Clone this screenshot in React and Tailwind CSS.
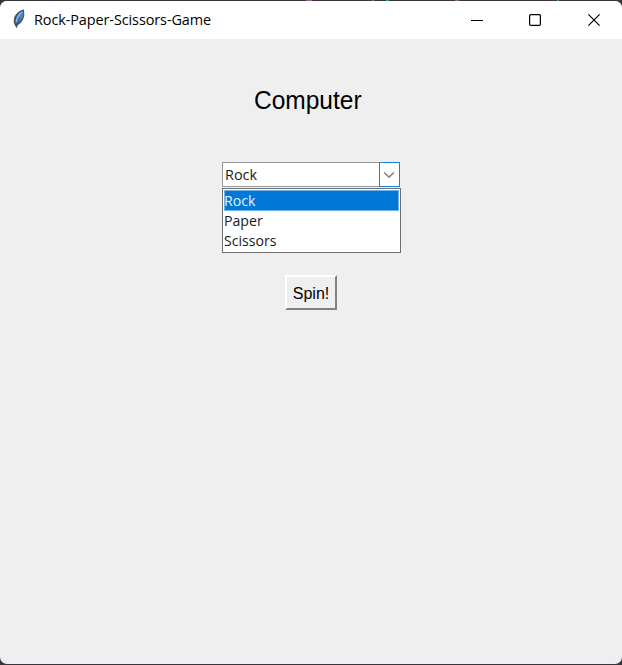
const options = ["Rock", "Paper", "Scissors"];

function Feather() {
  return (
    <svg className="-mt-[2px] ml-[12px] h-[21px] w-[14px] shrink-0" viewBox="0 0 14 21">
      <path d="M12 .6 C8.5 .8 3.6 4.5 2 9 L1.7 13.4 L2.8 16 L4.6 19.6 L5.4 16.2 C9.2 14.4 11.8 10.6 12.3 6 Z" fill="#4a4f57" />
      <path d="M11.2 1.6 C7.2 3.2 3.4 7 3.4 14.6 C8 13.4 10.8 9.9 11.4 5.4 Z" fill="#4788cc" />
      <path d="M9.6 3.2 C6.6 5.8 4.8 9.2 4.3 13" stroke="#8fbbe6" strokeWidth="1.3" fill="none" />
      <path d="M8 8.8 C7 11 5.4 13.6 4.6 18" stroke="#2a4264" strokeWidth=".8" fill="none" />
    </svg>
  );
}

function TitleBar() {
  return (
    <header className="flex h-[38px] shrink-0 items-center bg-white">
      <Feather />
      <h1 className="-mt-[2px] ml-[8px] w-[200px] origin-left scale-x-[0.963] whitespace-nowrap font-['Open_Sans',sans-serif] text-[15px] leading-[20px] tracking-[-0.1px] text-black">
        Rock-Paper-Scissors-Game
      </h1>
      <div className="ml-auto flex h-full">
        <button aria-label="Minimize" className="flex w-[58px] items-center justify-center">
          <svg width="12" height="12" viewBox="0 0 12 12"><path d="M0 6.5H12" stroke="#000" /></svg>
        </button>
        <button aria-label="Maximize" className="flex w-[58px] items-center justify-center">
          <svg width="12" height="12" viewBox="0 0 12 12"><rect x=".6" y=".6" width="10.8" height="10.8" rx="1.2" fill="none" stroke="#000" strokeWidth="1.2" /></svg>
        </button>
        <button aria-label="Close" className="flex w-[58px] items-center justify-center pl-[2px]">
          <svg width="12" height="12" viewBox="0 0 12 12"><path d="M.4 .4L11.6 11.6M11.6 .4L.4 11.6" stroke="#000" strokeWidth="1.15" /></svg>
        </button>
      </div>
    </header>
  );
}

export default function App() {
  return (
    <div className="flex h-[665px] w-[622px] flex-col bg-[#38363a]">
      <div className="flex h-px shrink-0">
        <i className="ml-[306px] w-[6px] bg-[#93618c]" />
        <i className="ml-[60px] w-[2px] bg-[#3a9a8b]" />
        <i className="ml-[12px] w-[3px] bg-[#3a9a8b]" />
        <i className="ml-[66px] w-[4px] bg-[#93618c]" />
        <i className="ml-[98px] w-[2px] bg-[#3a9a8b]" />
      </div>
      <div className="flex h-[663px] flex-col overflow-hidden rounded-[7px] bg-[#efefef]">
        <TitleBar />
        <main className="flex flex-col font-['Open_Sans',sans-serif] text-[14px] text-[#1a1a1a]">
          <h2 className="ml-[254px] mt-[46px] h-[30px] w-[120px] origin-left scale-x-[0.98] whitespace-nowrap font-['Liberation_Sans',Arial,sans-serif] text-[25px] leading-[30px] text-black">
            Computer
          </h2>
          <div className="ml-[222px] mt-[47px] flex h-[25px] w-[178px] border border-[#999] bg-white">
            <span className="ml-[2px] flex-1 origin-left scale-x-[1.03] leading-[24px]">Rock</span>
            <button aria-label="Open choices" className="-m-px flex w-[21px] items-center justify-center border border-[#1a80d8] bg-white pr-px">
              <svg width="12" height="8" viewBox="0 0 12 8"><path d="M1 1.5L6 6.2L11 1.5" fill="none" stroke="#858585" strokeWidth="1.6" /></svg>
            </button>
          </div>
          <ul className="ml-[222px] mt-px flex h-[65px] w-[179px] flex-col border border-[#707070] bg-white p-px">
            {options.map((o, i) => (
              <li key={o} className={i === 0 ? "h-[21px] border border-[#6eb2ec] bg-[#0078d7] text-[#e4f1fc]" : "h-[20px] border-l border-transparent"}>
                <span className="-ml-px block w-fit origin-left scale-x-[1.01] leading-[19px]">{o}</span>
              </li>
            ))}
          </ul>
          <button className="ml-[285px] mt-[22px] flex h-[35px] w-[52px] items-center justify-center border-2 border-b-[#828282] border-l-white border-r-[#828282] border-t-white bg-[#efefef] pt-[2px] font-['Liberation_Sans',Arial,sans-serif] text-[16px] text-black">
            Spin!
          </button>
        </main>
      </div>
    </div>
  );
}
